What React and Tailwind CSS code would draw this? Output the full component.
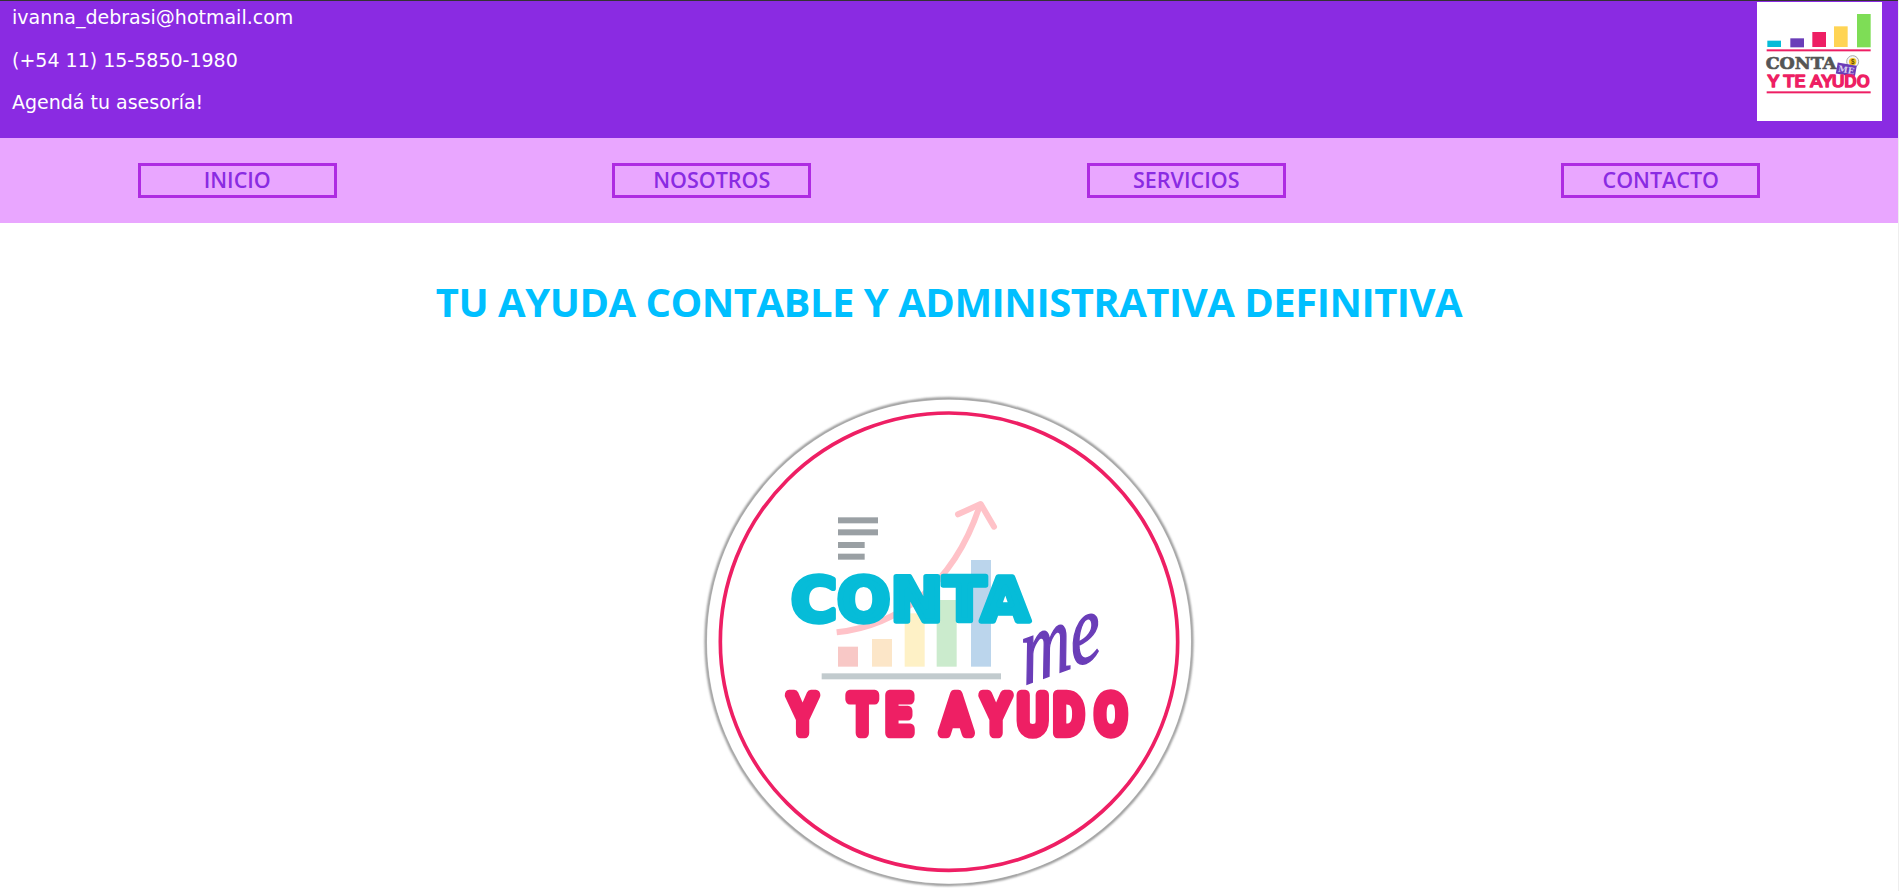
const navItems = ['INICIO', 'NOSOTROS', 'SERVICIOS', 'CONTACTO']

const SmallLogo = () => (
  <svg viewBox="171 6 375 357" className="block h-[119px] w-[125px] bg-white">
    <rect x="202" y="122" width="41" height="19" fill="#06bcd8" />
    <rect x="271" y="115" width="41" height="27" fill="#6a3db8" />
    <rect x="337" y="96" width="41" height="45" fill="#ee1f64" />
    <rect x="402" y="79" width="41" height="62" fill="#ffd454" />
    <rect x="471" y="42" width="41" height="100" fill="#7edd56" />
    <rect x="200" y="148" width="312" height="6" fill="#ee1f64" />
    <text x="197" y="207" textLength="212" lengthAdjust="spacingAndGlyphs" fontFamily="'DejaVu Serif', serif" fontWeight="700" fontSize="52" fill="#555555" stroke="#555555" strokeWidth="2">CONTA</text>
    <circle cx="458" cy="185" r="18" fill="#f4f4f4" stroke="#aaaaaa" strokeWidth="3" />
    <circle cx="458" cy="185" r="11" fill="#f6c21c" />
    <text x="458" y="192" textAnchor="middle" fontFamily="'Liberation Sans', sans-serif" fontWeight="700" fontSize="19" fill="#5a4a10">$</text>
    <g transform="rotate(10 438 208)">
      <rect x="410" y="192" width="58" height="34" fill="#6a3db8" />
      <text x="439" y="219" textAnchor="middle" fontFamily="'DejaVu Serif', serif" fontWeight="700" fontSize="26" fill="#d9cff0">ME</text>
    </g>
    <text x="203" y="261" textLength="306" lengthAdjust="spacingAndGlyphs" fontFamily="Roboto, sans-serif" fontSize="52" fill="#ee1f64" stroke="#ee1f64" strokeWidth="5" strokeLinejoin="round">Y TE AYUDO</text>
    <rect x="200" y="274" width="312" height="6" fill="#ee1f64" />
  </svg>
)

const BigLogo = () => (
  <svg viewBox="0 0 1560 1503" className="block h-[501px] w-[520px]">
    <defs>
      <filter id="edge" x="-5%" y="-5%" width="110%" height="110%">
        <feGaussianBlur stdDeviation="3" />
      </filter>
    </defs>
    <circle cx="777" cy="755" r="729" fill="none" stroke="#8c8c8c" strokeWidth="8" filter="url(#edge)" />
    <circle cx="777" cy="755" r="726" fill="#ffffff" />
    <circle cx="777" cy="755" r="686" fill="none" stroke="#ee1f64" strokeWidth="11" />

    <rect x="444" y="382" width="120" height="18" fill="#9aa0a4" />
    <rect x="444" y="418" width="120" height="18" fill="#9aa0a4" />
    <rect x="444" y="456" width="80" height="18" fill="#9aa0a4" />
    <rect x="444" y="491" width="80" height="18" fill="#9aa0a4" />

    <rect x="444" y="770" width="60" height="60" fill="#f8c8c6" />
    <rect x="546" y="747" width="60" height="83" fill="#fce6c8" />
    <rect x="644" y="670" width="60" height="160" fill="#fef1c6" />
    <rect x="740" y="630" width="60" height="200" fill="#cbebcd" />
    <rect x="843" y="510" width="60" height="320" fill="#bbd5ec" />
    <rect x="395" y="850" width="538" height="18" fill="#c2cbce" />

    <path d="M440 727C620 708 790 590 870 345" fill="none" stroke="#ffc2c8" strokeWidth="18" />
    <path d="M804 373L872 342L912 410" fill="none" stroke="#ffc2c8" strokeWidth="18" strokeLinecap="round" strokeLinejoin="round" />

    <text x="303" y="692" textLength="716" lengthAdjust="spacingAndGlyphs" fontFamily="'DejaVu Sans', sans-serif" fontWeight="700" fontSize="180" fill="#06bcd8" stroke="#06bcd8" strokeWidth="16" strokeLinejoin="round">CONTA</text>
    <text transform="translate(-29 36) rotate(-20 1030 850) skewX(-14)" x="1245" y="850" textLength="250" lengthAdjust="spacingAndGlyphs" fontFamily="'Liberation Serif', serif" fontStyle="italic" fontSize="280" fill="#6a3db8" stroke="#6a3db8" strokeWidth="5">me</text>
    <text transform="scale(0.85 1)" x="349 450 560 692 800 888 1032 1158 1284 1430" y="1029" fontFamily="Roboto, sans-serif" fontSize="160" fill="#ee1f64" stroke="#ee1f64" strokeWidth="32" strokeLinejoin="round">Y TE AYUDO</text>
  </svg>
)

const App = () => {
  return (
    <div className="h-[891px] w-[1899px] overflow-hidden bg-[#eeeeee]">
      <div className="h-full w-[1898px] bg-white">
        <header className="flex h-[138px] justify-between border-t border-[#333333] bg-[#8a2be2] pl-3 pr-4 pt-px font-['DejaVu_Sans',sans-serif] text-[19px] leading-[30px] text-white">
          <div className="flex flex-col gap-[12.5px]">
            <p>ivanna_debrasi@hotmail.com</p>
            <p>(+54 11) 15-5850-1980</p>
            <p>Agendá tu asesoría!</p>
          </div>
          <SmallLogo />
        </header>

        <nav className="grid h-[85px] grid-cols-4 items-start bg-[#e9a6ff] pt-[25px]">
          {navItems.map((item) => (
            <a
              key={item}
              className="mx-auto block h-[35px] w-[199px] border-[3px] border-[#ae2be2] text-center font-['Open_Sans',sans-serif] text-[21.5px] font-semibold leading-[27px] text-[#8a2be2]"
            >
              {item}
            </a>
          ))}
        </nav>

        <main className="flex flex-col items-center">
          <h1 className="pt-[51px] text-center font-['Open_Sans',sans-serif] text-[40px] font-bold leading-[56px] tracking-[-0.5px] text-[#00bfff]">
            TU AYUDA CONTABLE Y ADMINISTRATIVA DEFINITIVA
          </h1>
          <div className="pl-[2px] pt-[60px]">
            <BigLogo />
          </div>
        </main>
      </div>
    </div>
  )
}

export default App
